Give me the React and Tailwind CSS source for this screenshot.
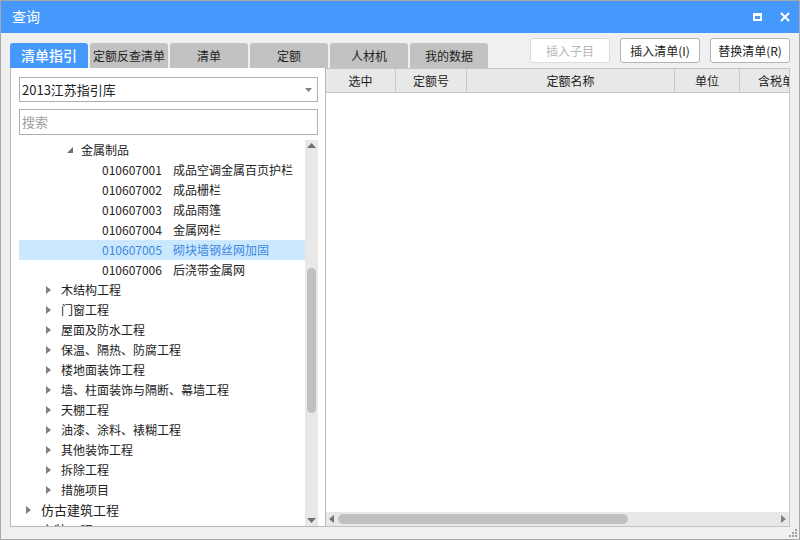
import React from 'react'

const font = { fontFamily: '"Microsoft YaHei", "Noto Sans CJK SC", "Noto Sans", sans-serif' }

const tabs = ['清单指引', '定额反查清单', '清单', '定额', '人材机', '我的数据']

const items = [
  ['010607001', '成品空调金属百页护栏'],
  ['010607002', '成品栅栏'],
  ['010607003', '成品雨篷'],
  ['010607004', '金属网栏'],
  ['010607005', '砌块墙钢丝网加固'],
  ['010607006', '后浇带金属网'],
]

const groups = [
  '木结构工程',
  '门窗工程',
  '屋面及防水工程',
  '保温、隔热、防腐工程',
  '楼地面装饰工程',
  '墙、柱面装饰与隔断、幕墙工程',
  '天棚工程',
  '油漆、涂料、裱糊工程',
  '其他装饰工程',
  '拆除工程',
  '措施项目',
]

function Arrow() {
  return (
    <svg width="5" height="8" viewBox="0 0 5 8" className="shrink-0">
      <path d="M0 0 L5 4 L0 8 Z" fill="#808080" />
    </svg>
  )
}

function App() {
  return (
    <div className="w-[800px] h-[540px] bg-[#f0f0f0] border border-[#a8a8a8] flex flex-col text-[12px] text-[#222] overflow-hidden" style={font}>
      {/* 标题栏 */}
      <div className="h-[33px] bg-[#4699fc] flex items-center justify-between pl-[12px] pr-[10px] shrink-0 -mx-px -mt-px">
        <span className="text-white text-[14px]">查询</span>
        <div className="flex items-center gap-[18px]">
          <div className="w-[9px] h-[8px] border-2 border-white border-t-[3px]" />
          <svg width="10" height="10" viewBox="0 0 10 10">
            <path d="M1 1 L9 9 M9 1 L1 9" stroke="white" strokeWidth="2" />
          </svg>
        </div>
      </div>

      {/* 标签页和按钮 */}
      <div className="h-[35px] flex justify-between px-[9px] shrink-0">
        <div className="flex gap-[2px] self-end">
          {tabs.map((t, i) => (
            <div
              key={t}
              className={`h-[25px] w-[78px] flex items-center justify-center rounded-t-[3px] whitespace-nowrap ${
                i === 0 ? 'bg-[#4699fc] text-white text-[14px] font-medium' : 'bg-[#c2c2c2] text-[#222]'
              }`}
            >
              {t}
            </div>
          ))}
        </div>
        <div className="flex gap-[10px] mt-[5px]">
          <button className="h-[25px] w-[80px] bg-white border border-[#dcdcdc] rounded-[3px] text-[#b8b8b8]">插入子目</button>
          <button className="h-[25px] w-[80px] bg-white border border-[#b4b4b4] rounded-[3px]">插入清单(I)</button>
          <button className="h-[25px] w-[80px] bg-white border border-[#b4b4b4] rounded-[3px]">替换清单(R)</button>
        </div>
      </div>

      {/* 主体 */}
      <div className="flex h-[459px] ml-[9px] mr-[9px] shrink-0">
        {/* 左侧 */}
        <div className="w-[316px] shrink-0 bg-white border border-[#b9b9b9] border-t-0 flex flex-col pl-[8px] pr-[7px] pt-[9px]">
          <div className="h-[25px] border border-[#b0b0b0] flex items-center justify-between px-[2px] shrink-0">
            <span className="text-[13px]">2013江苏指引库</span>
            <svg width="7" height="4" viewBox="0 0 7 4" className="mr-[3px]">
              <path d="M0 0 L7 0 L3.5 4 Z" fill="#808080" />
            </svg>
          </div>
          <div className="h-[26px] border border-[#b0b0b0] flex items-center px-[2px] mt-[7px] shrink-0 text-[#a0a0a0] text-[13px]">搜索</div>
          <div className="flex flex-1 mt-[5px] min-h-0">
            <div className="flex-1 min-w-0 overflow-hidden whitespace-nowrap">
              <div className="h-[20px] flex items-center pl-[48px] gap-[8px]">
                <svg width="6" height="6" viewBox="0 0 6 6" className="shrink-0">
                  <path d="M6 0 L6 6 L0 6 Z" fill="#707070" />
                </svg>
                <span>金属制品</span>
              </div>
              {items.map(([code, name]) => (
                <div
                  key={code}
                  className={`h-[20px] flex items-center pl-[83px] ${code === '010607005' ? 'bg-[#cce8ff] text-[#3b87e0]' : ''}`}
                >
                  <span className="w-[71px] shrink-0">{code}</span>
                  <span>{name}</span>
                </div>
              ))}
              {groups.map((g) => (
                <div key={g} className="h-[20px] flex items-center pl-[27px] gap-[10px]">
                  <Arrow />
                  <span>{g}</span>
                </div>
              ))}
              <div className="h-[20px] flex items-center pl-[7px] gap-[10px] text-[13px]">
                <Arrow />
                <span>仿古建筑工程</span>
              </div>
              <div className="h-[20px] flex items-center pl-[7px] gap-[10px] text-[13px]">
                <span className="w-[5px]" />
                <span>安装工程</span>
              </div>
            </div>
            {/* 竖向滚动条 */}
            <div className="w-[13px] bg-[#e8e8e8] flex flex-col items-center shrink-0">
              <svg width="9" height="5" viewBox="0 0 9 5" className="mt-[3px]">
                <path d="M0 5 L4.5 0 L9 5 Z" fill="#707070" />
              </svg>
              <div className="w-[9px] h-[145px] bg-[#c0c0c0] rounded-[5px] mt-[120px]" />
              <div className="flex-1" />
              <svg width="9" height="5" viewBox="0 0 9 5" className="mb-[3px]">
                <path d="M0 0 L9 0 L4.5 5 Z" fill="#707070" />
              </svg>
            </div>
          </div>
        </div>

        {/* 右侧 */}
        <div className="flex-1 min-w-0 bg-white border border-[#c4c4c4] border-l-0 flex flex-col">
          <div className="h-[24px] bg-[#e8e8e8] flex border-b border-[#c8c8c8] shrink-0 overflow-hidden whitespace-nowrap">
            <div className="w-[70px] border-r border-[#c8c8c8] flex items-center justify-center shrink-0">选中</div>
            <div className="w-[71px] border-r border-[#c8c8c8] flex items-center justify-center shrink-0">定额号</div>
            <div className="w-[208px] border-r border-[#c8c8c8] flex items-center justify-center shrink-0">定额名称</div>
            <div className="w-[65px] border-r border-[#c8c8c8] flex items-center justify-center shrink-0">单位</div>
            <div className="w-[84px] flex items-center justify-center shrink-0">含税单价</div>
          </div>
          <div className="flex-1" />
          {/* 横向滚动条 */}
          <div className="h-[14px] bg-[#e8e8e8] flex items-center shrink-0 px-[3px]">
            <svg width="5" height="8" viewBox="0 0 5 8" className="shrink-0">
              <path d="M5 0 L0 4 L5 8 Z" fill="#707070" />
            </svg>
            <div className="w-[290px] h-[10px] bg-[#c0c0c0] rounded-[5px] ml-[4px]" />
            <div className="flex-1" />
            <Arrow />
          </div>
        </div>
      </div>

      {/* 调整大小手柄 */}
      <div className="flex-1 flex justify-end items-end pr-[2px] pb-[2px]">
        <svg width="8" height="8" viewBox="0 0 8 8">
          <rect x="6" y="0" width="2" height="2" fill="#a0a0a0" />
          <rect x="3" y="3" width="2" height="2" fill="#a0a0a0" />
          <rect x="6" y="3" width="2" height="2" fill="#a0a0a0" />
          <rect x="0" y="6" width="2" height="2" fill="#a0a0a0" />
          <rect x="3" y="6" width="2" height="2" fill="#a0a0a0" />
          <rect x="6" y="6" width="2" height="2" fill="#a0a0a0" />
        </svg>
      </div>
    </div>
  )
}

export default App
